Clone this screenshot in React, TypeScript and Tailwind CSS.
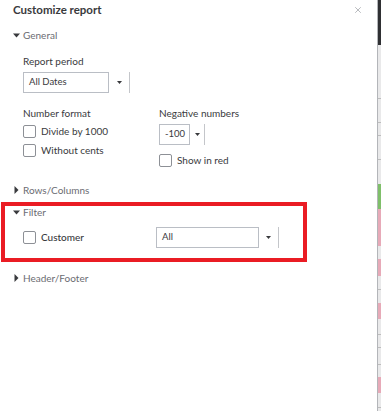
import { X } from 'lucide-react'

function Caret({ open }: { open: boolean }) {
  return open ? (
    <svg width="7" height="5" viewBox="0 0 7 5" className="shrink-0">
      <path d="M0 0.5h7L3.5 4.5z" fill="#393a3d" />
    </svg>
  ) : (
    <svg width="5" height="8" viewBox="0 0 5 8" className="shrink-0">
      <path d="M0.5 0v8L4.5 4z" fill="#393a3d" />
    </svg>
  )
}

function SectionToggle({ label, open }: { label: string; open: boolean }) {
  return (
    <div className="flex items-center h-[14px] pl-[13px] gap-[4px] text-[10px] text-[#6b6c72]">
      <span className="w-[6px] flex justify-center">
        <Caret open={open} />
      </span>
      <span>{label}</span>
    </div>
  )
}

function Checkbox({ label, dark }: { label: string; dark?: boolean }) {
  return (
    <div className="flex items-center h-[13px] gap-[5px]">
      <span className="w-[13px] h-[13px] border border-[#8d9096] rounded-[2px] bg-white shrink-0" />
      <span className={dark ? 'text-[10px] text-[#393a3d] font-medium' : 'text-[10px] text-[#393a3d]'}>{label}</span>
    </div>
  )
}

function Select({ value, boxW, btnW, h = 21 }: { value: string; boxW: number; btnW: number; h?: number }) {
  return (
    <div className="flex items-stretch" style={{ height: h }}>
      <div
        className="border border-[#babec5] flex items-center pl-[5px] text-[9.5px] text-[#393a3d]"
        style={{ width: boxW }}
      >
        {value}
      </div>
      <div className="flex items-center justify-center border-r border-[#c4c6ca]" style={{ width: btnW }}>
        <svg width="5" height="3" viewBox="0 0 5 3">
          <path d="M0 0h5L2.5 3z" fill="#393a3d" />
        </svg>
      </div>
    </div>
  )
}

const stripRows: { h: number; c: string }[] = [
  { h: 45, c: 'bg-[#2f3033]' },
  { h: 53, c: 'bg-[#e9e9ea]' },
  { h: 1, c: 'bg-[#bdbdbd]' },
  { h: 23, c: 'bg-[#e9e9ea]' },
  { h: 1, c: 'bg-[#bdbdbd]' },
  { h: 12, c: 'bg-[#e9e9ea]' },
  { h: 1, c: 'bg-[#bdbdbd]' },
  { h: 23, c: 'bg-[#e9e9ea]' },
  { h: 1, c: 'bg-[#bdbdbd]' },
  { h: 24, c: 'bg-[#e9e9ea]' },
  { h: 25, c: 'bg-[#7fbf6a]' },
  { h: 37, c: 'bg-[#e7aab8]' },
  { h: 13, c: 'bg-[#e9e9ea]' },
  { h: 17, c: 'bg-[#e7aab8]' },
  { h: 13, c: 'bg-[#e9e9ea]' },
  { h: 1, c: 'bg-[#bdbdbd]' },
  { h: 13, c: 'bg-[#e9e9ea]' },
  { h: 16, c: 'bg-[#e7aab8]' },
  { h: 15, c: 'bg-[#e9e9ea]' },
  { h: 1, c: 'bg-[#bdbdbd]' },
  { h: 12, c: 'bg-[#e9e9ea]' },
  { h: 1, c: 'bg-[#bdbdbd]' },
  { h: 16, c: 'bg-[#e9e9ea]' },
  { h: 1, c: 'bg-[#bdbdbd]' },
  { h: 12, c: 'bg-[#e9e9ea]' },
  { h: 16, c: 'bg-[#e7aab8]' },
  { h: 14, c: 'bg-[#e9e9ea]' },
  { h: 1, c: 'bg-[#bdbdbd]' },
  { h: 10, c: 'bg-[#e9e9ea]' },
]

export default function App() {
  return (
    <div
      className="flex w-[381px] h-[411px] overflow-hidden bg-white"
      style={{ fontFamily: 'Lato, "Noto Sans", sans-serif' }}
    >
      {/* Panel */}
      <div className="w-[378px] shrink-0 border-r border-[#b3b5b9] flex flex-col">
        {/* Header */}
        <div className="flex items-center justify-between h-[18px] pl-[13px] pr-[14px] mt-[1px]">
          <h1 className="text-[11.5px] font-bold text-[#393a3d]">Customize report</h1>
          <X className="w-[10px] h-[10px] text-[#8d9096]" strokeWidth={1.5} />
        </div>

        {/* General */}
        <div className="mt-[9px]">
          <SectionToggle label="General" open />
        </div>
        <div className="pl-[23px]">
          <p className="mt-[12px] h-[14px] leading-[14px] text-[10px] text-[#393a3d]">Report period</p>
          <div className="mt-[4px]">
            <Select value="All Dates" boxW={86} btnW={21} />
          </div>

          <div className="flex mt-[13px]">
            <div className="w-[136px]">
              <p className="h-[14px] leading-[14px] text-[10px] text-[#393a3d]">Number format</p>
              <div className="mt-[5px] flex flex-col gap-[6px]">
                <Checkbox label="Divide by 1000" />
                <Checkbox label="Without cents" />
              </div>
            </div>
            <div>
              <p className="h-[14px] leading-[14px] text-[10px] text-[#393a3d]">Negative numbers</p>
              <div className="mt-[4px]">
                <Select value="-100" boxW={31} btnW={15} />
              </div>
              <div className="mt-[9px]">
                <Checkbox label="Show in red" />
              </div>
            </div>
          </div>
        </div>

        {/* Rows/Columns */}
        <div className="mt-[16px]">
          <SectionToggle label="Rows/Columns" open={false} />
        </div>

        {/* Filter (highlighted) */}
        <div className="mt-[5px] ml-[1px] w-[306px] h-[60px] border-[4px] border-[#ea1c24]">
          <div className="-ml-[5px] -mt-[1px]">
            <SectionToggle label="Filter" open />
          </div>
          <div className="flex items-center mt-[8px] pl-[18px]">
            <div className="w-[133px]">
              <Checkbox label="Customer" dark />
            </div>
            <Select value="All" boxW={103} btnW={20} h={21} />
          </div>
        </div>

        {/* Header/Footer */}
        <div className="mt-[9px]">
          <SectionToggle label="Header/Footer" open={false} />
        </div>
      </div>

      {/* Page behind the panel */}
      <div className="w-[3px] flex flex-col">
        {stripRows.map((r, i) => (
          <div key={i} className={`${r.c} shrink-0`} style={{ height: r.h }} />
        ))}
      </div>
    </div>
  )
}
